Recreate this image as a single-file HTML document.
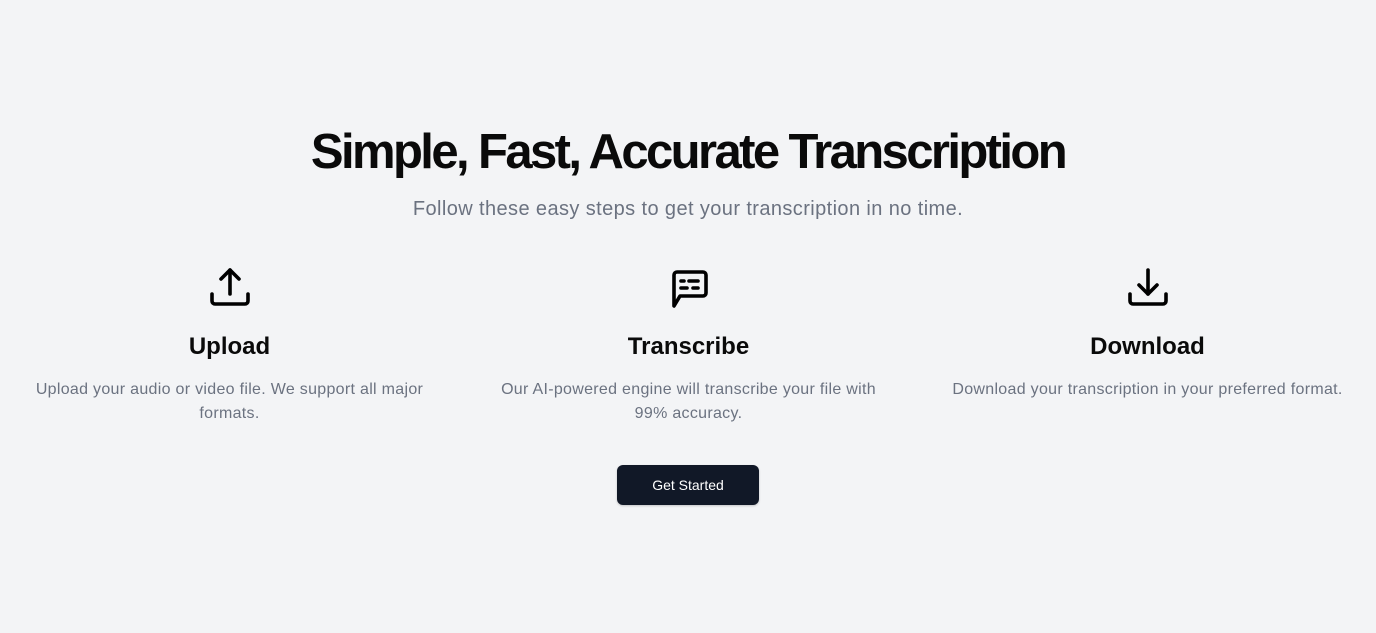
<!DOCTYPE html>
<html><head><meta charset="utf-8"><style>
body{margin:0;background:#f3f4f6;font-family:"Liberation Sans",sans-serif;width:1376px;height:633px;overflow:hidden}
h1{position:absolute;top:122px;left:0;width:1376px;text-align:center;margin:0;font-size:49px;font-weight:700;letter-spacing:-2.6px;color:#0a0a0a;line-height:60px}
.sub{position:absolute;top:196px;left:0;width:1376px;text-align:center;font-size:20px;letter-spacing:.4px;color:#6b7280;line-height:26px}
.col{position:absolute;top:264px;width:459px;text-align:center}
.col svg{display:block;margin:0 auto}
.col h3{margin:20px 0 0;font-size:24px;font-weight:700;color:#0a0a0a;line-height:30px}
.col p{margin:16px auto 0;width:408px;font-size:16px;letter-spacing:.3px;line-height:24px;color:#6b7280}
.btn{position:absolute;left:617px;top:465px;width:142px;height:40px;background:#111827;border-radius:6px;color:#fff;font-size:14px;line-height:40px;text-align:center;box-shadow:0 1px 2px rgba(0,0,0,.2)}
</style></head><body>
<h1>Simple, Fast, Accurate Transcription</h1>
<div class="sub">Follow these easy steps to get your transcription in no time.</div>
<div class="col" style="left:0">
<svg width="48" height="48" viewBox="0 0 24 24" fill="none" stroke="#000" stroke-width="1.8" stroke-linecap="round" stroke-linejoin="round"><path d="M3 15v3.5a1.5 1.5 0 0 0 1.5 1.5h15a1.5 1.5 0 0 0 1.5-1.5V15"/><path d="M12 15V3"/><path d="M7.5 7.5 12 3l4.5 4.5"/></svg>
<h3>Upload</h3><p>Upload your audio or video file. We support all major formats.</p></div>
<div class="col" style="left:459px">
<svg width="48" height="48" viewBox="0 0 24 24" fill="none" stroke="#000" stroke-width="1.8" stroke-linecap="round" stroke-linejoin="round"><path d="M4.5 21V5.5A1.5 1.5 0 0 1 6 4h13a1.5 1.5 0 0 1 1.5 1.5v9A1.5 1.5 0 0 1 19 16H7.5L4.5 21z"/><path d="M8 8.5h1.5M12 8.5h4.5M8 12h3M14 12h2.5"/></svg>
<h3>Transcribe</h3><p>Our AI-powered engine will transcribe your file with 99% accuracy.</p></div>
<div class="col" style="left:918px">
<svg width="48" height="48" viewBox="0 0 24 24" fill="none" stroke="#000" stroke-width="1.8" stroke-linecap="round" stroke-linejoin="round"><path d="M3 15v3.5a1.5 1.5 0 0 0 1.5 1.5h15a1.5 1.5 0 0 0 1.5-1.5V15"/><path d="M12 3v12"/><path d="M7.5 10.5 12 15l4.5-4.5"/></svg>
<h3>Download</h3><p>Download your transcription in your preferred format.</p></div>
<div class="btn">Get Started</div>
</body></html>
